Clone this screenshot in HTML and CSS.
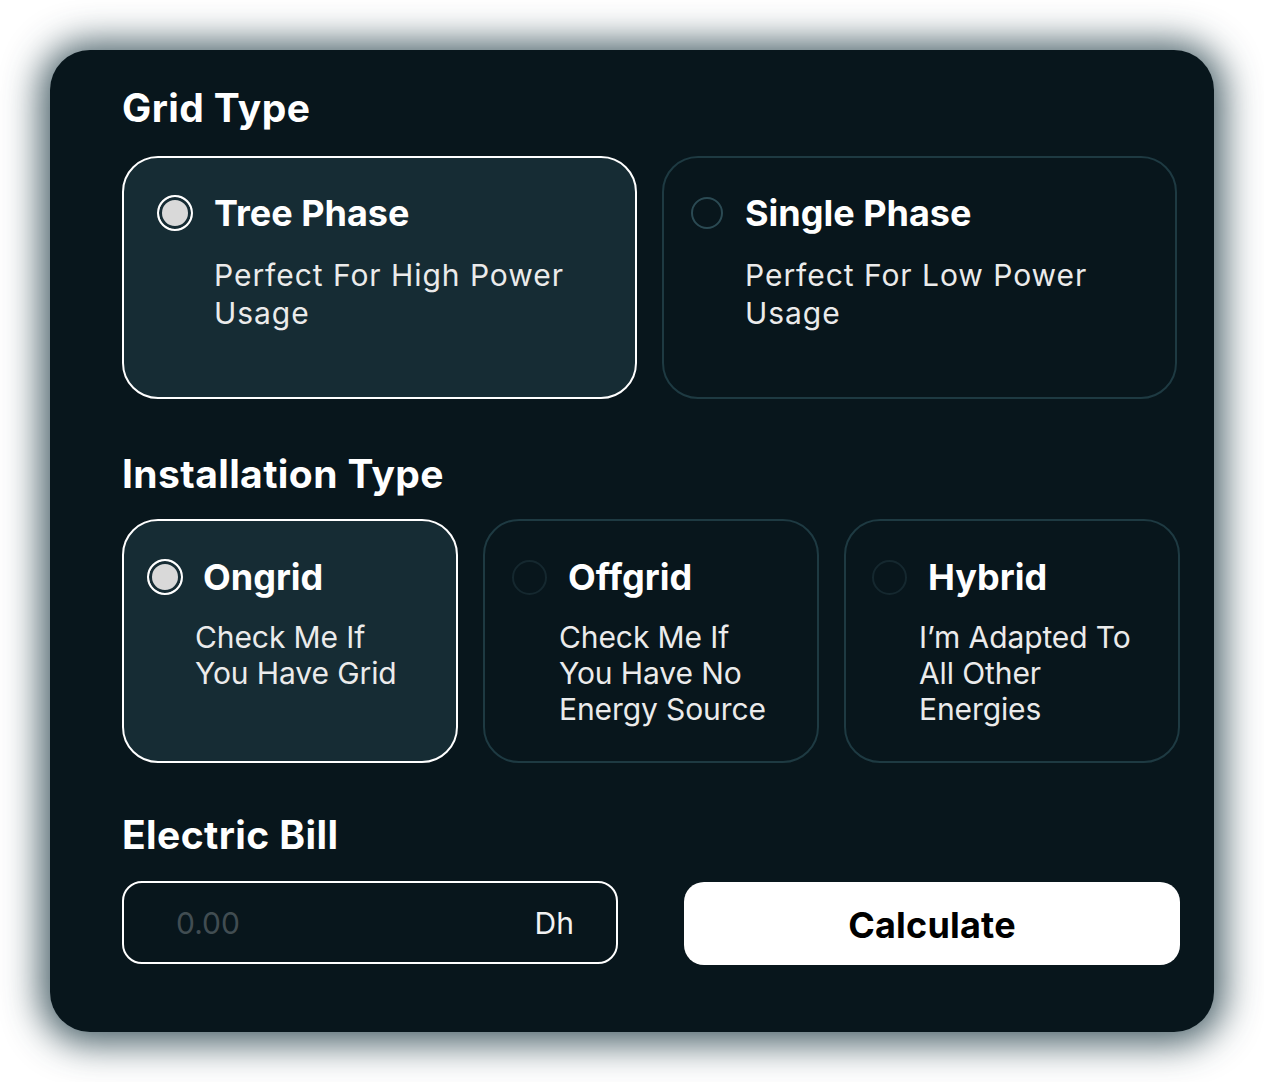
FILE: index.html
```html
<!DOCTYPE html>
<html lang="en">
<head>
<meta charset="utf-8">
<title>Solar Calculator</title>
<link rel="stylesheet" href="styles.css">
</head>
<body>
<main class="panel">
  <h2 class="heading heading--grid">Grid Type</h2>
  <div class="row row--grid">
    <label class="card card--grid card--sel g1">
      <div class="card-head">
        <span class="radio radio--sel"></span>
        <span class="card-title">Tree Phase</span>
      </div>
      <p class="card-desc">Perfect For High Power<br>Usage</p>
    </label>
    <label class="card card--grid g2">
      <div class="card-head">
        <span class="radio radio--light"></span>
        <span class="card-title">Single Phase</span>
      </div>
      <p class="card-desc">Perfect For Low Power<br>Usage</p>
    </label>
  </div>

  <h2 class="heading heading--ins">Installation Type</h2>
  <div class="row row--ins">
    <label class="card card--ins card--sel i1">
      <div class="card-head">
        <span class="radio radio--sel"></span>
        <span class="card-title">Ongrid</span>
      </div>
      <p class="card-desc">Check Me If<br>You Have Grid</p>
    </label>
    <label class="card card--ins i2">
      <div class="card-head">
        <span class="radio radio--dark"></span>
        <span class="card-title">Offgrid</span>
      </div>
      <p class="card-desc">Check Me If<br>You Have No<br>Energy Source</p>
    </label>
    <label class="card card--ins i3">
      <div class="card-head">
        <span class="radio radio--dark"></span>
        <span class="card-title">Hybrid</span>
      </div>
      <p class="card-desc">I’m Adapted To<br>All Other<br>Energies</p>
    </label>
  </div>

  <h2 class="heading heading--bill">Electric Bill</h2>
  <div class="row row--bill">
    <div class="bill-input">
      <span class="bill-placeholder">0.00</span>
      <span class="bill-unit">Dh</span>
    </div>
    <button class="calc-btn">Calculate</button>
  </div>
</main>
</body>
</html>
```

FILE: styles.css
```css
* { box-sizing: border-box; }

html, body {
  margin: 0;
  padding: 0;
  background: #ffffff;
}

body {
  font-family: Inter, "Noto Sans", "Liberation Sans", sans-serif;
  width: 1264px;
  height: 1082px;
  overflow: hidden;
}

.panel {
  margin: 50px 0 0 50px;
  width: 1164px;
  height: 982px;
  border-radius: 40px;
  background: #08161c;
  padding: 0 0 0 72px;
  display: flex;
  flex-direction: column;
  box-shadow: 0 2px 36px 10px rgba(34, 62, 72, 0.82);
}

.heading {
  margin: 0;
  color: #ffffff;
  font-weight: 700;
  font-size: 39px;
  letter-spacing: 0.4px;
  line-height: 44px;
  height: 44px;
}

.heading--grid { margin-top: 36px; }
.heading--ins { margin-top: 53px; }
.heading--bill { margin-top: 50px; }

.row {
  display: flex;
  gap: 25px;
}

.row--grid { margin-top: 26px; }
.row--ins { margin-top: 23px; }
.row--bill { margin-top: 24px; gap: 66px; align-items: flex-start; }

.card {
  display: flex;
  flex-direction: column;
  border: 2px solid #1e3a42;
  border-radius: 36px;
  color: #ffffff;
  cursor: pointer;
}

.card--sel {
  border: 2px solid #ffffff;
  background: #162c34;
}

.card--grid {
  width: 515px;
  height: 243px;
  padding-top: 33px;
}

.card--ins {
  width: 336px;
  height: 244px;
  padding-top: 34px;
}

.card-head {
  display: flex;
  align-items: center;
  height: 44px;
}

.card-title {
  font-weight: 700;
  font-size: 36px;
  line-height: 44px;
  color: #ffffff;
}

.card-desc {
  margin: 0;
  font-weight: 400;
  color: #ebebeb;
}

.card--grid .card-desc {
  font-size: 30px;
  letter-spacing: 0.95px;
  line-height: 38px;
  margin-top: 21px;
}

.card--ins .card-desc {
  font-size: 30px;
  letter-spacing: -0.1px;
  line-height: 36px;
  margin-top: 20px;
}

/* radios */
.radio {
  flex: none;
  border-radius: 50%;
  display: block;
}

.radio--sel {
  width: 36px;
  height: 36px;
  border: 2px solid #ffffff;
  background: #d9d9d9;
  box-shadow: inset 0 0 0 3px #162c34;
}

.radio--light {
  width: 32px;
  height: 32px;
  border: 2px solid #2b4a53;
}

.radio--dark {
  width: 35px;
  height: 35px;
  border: 2px solid #15282f;
}

/* per-card offsets */
.g1 { padding-left: 33px; }
.g1 .card-head { gap: 21px; }
.g1 .card-desc { margin-left: 57px; }

.g2 { padding-left: 27px; }
.g2 .card-head { gap: 22px; }
.g2 .card-desc { margin-left: 54px; }

.i1 { padding-left: 23px; }
.i1 .card-head { gap: 20px; }
.i1 .card-desc { margin-left: 48px; }

.i2 { padding-left: 27px; }
.i2 .card-head { gap: 21px; }
.i2 .card-desc { margin-left: 47px; }

.i3 { padding-left: 26px; }
.i3 .card-head { gap: 21px; }
.i3 .card-desc { margin-left: 47px; }

/* bill */
.bill-input {
  width: 496px;
  height: 83px;
  border: 2px solid #ffffff;
  border-radius: 20px;
  display: flex;
  align-items: center;
  justify-content: space-between;
  padding: 0 42px 0 52px;
  font-size: 30px;
}

.bill-placeholder { color: #414d52; }
.bill-unit { color: #f2f2f2; }

.calc-btn {
  width: 496px;
  height: 83px;
  margin-top: 1px;
  border: none;
  border-radius: 20px;
  background: #ffffff;
  color: #000000;
  font-family: inherit;
  font-weight: 700;
  font-size: 36px;
  letter-spacing: 0.2px;
  padding: 3px 0 0;
}
```
